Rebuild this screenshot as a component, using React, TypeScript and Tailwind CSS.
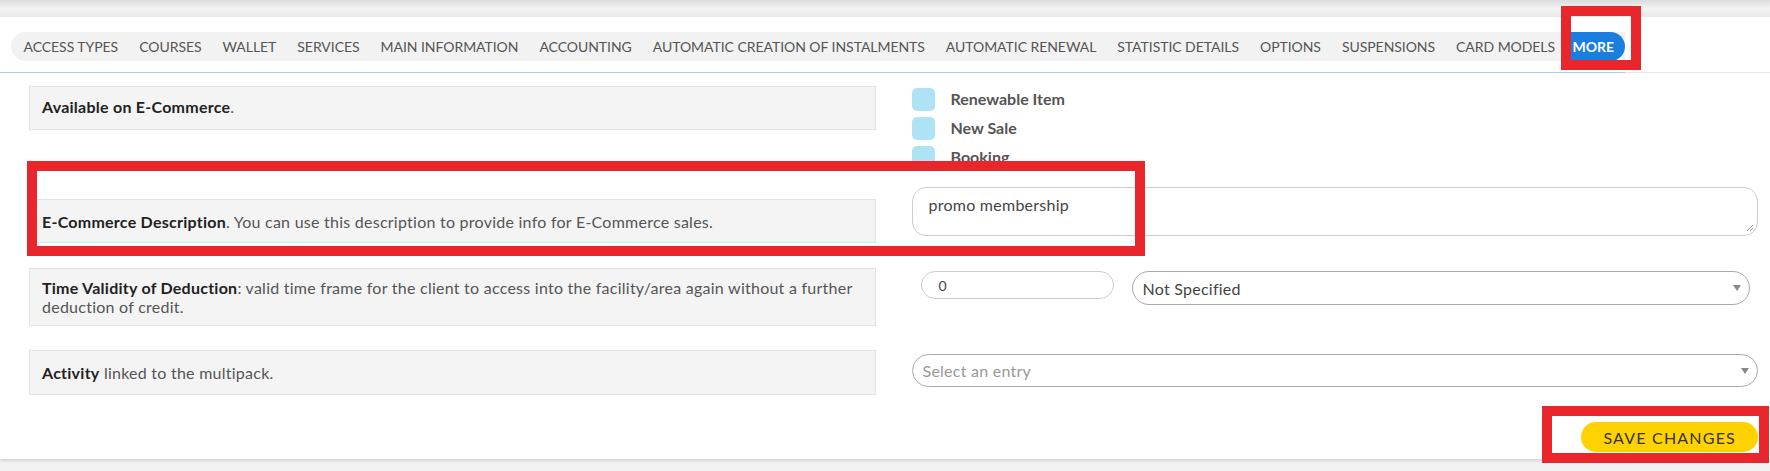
import React from 'react';

const tabs = [
  'ACCESS TYPES',
  'COURSES',
  'WALLET',
  'SERVICES',
  'MAIN INFORMATION',
  'ACCOUNTING',
  'AUTOMATIC CREATION OF INSTALMENTS',
  'AUTOMATIC RENEWAL',
  'STATISTIC DETAILS',
  'OPTIONS',
  'SUSPENSIONS',
  'CARD MODELS',
];

const checks = ['Renewable Item', 'New Sale', 'Booking'];

// small grey triangle used by the selects
const Caret = () => (
  <svg width="8" height="6" viewBox="0 0 8 6" className="shrink-0">
    <path d="M0 0h8L4 6z" fill="#888" />
  </svg>
);

export default function App() {
  return (
    <div className="relative w-[1770px] h-[471px] overflow-hidden bg-[#f2f2f2] font-['Lato','Liberation_Sans',sans-serif]">
      {/* previous panel edge */}
      <div className="h-[17px] bg-gradient-to-b from-[#dcdcdc] via-[#f3f3f3] to-[#e9e9e9]" />

      <div className="bg-white h-[442px] shadow-[0_2px_3px_rgba(0,0,0,0.12)]">
        {/* Tabs */}
        <div className="pt-[15px] flex border-b border-[#e6e6e6]">
          <div className="pl-[11px] pb-[11px] border-b border-[#a8ccec] -mb-px">
            <div className="flex items-center h-[29px] bg-[#f2f2f2] rounded-l-full">
              <div className="w-[2px]" />
              {tabs.map((t) => (
                <span key={t} className="px-[10.5px] text-[14px] text-[#555] whitespace-nowrap tracking-[-0.05px]">
                  {t}
                </span>
              ))}
              <span className="h-[29px] flex items-center pl-[7px] pr-[11px] bg-[#1a7ee0] text-white font-bold text-[14px] rounded-r-full">
                MORE
              </span>
            </div>
          </div>
        </div>

        {/* Form rows */}
        <div className="pl-[29px] pr-[12px] text-[16px] tracking-[0.25px] leading-[19px] text-[#555]">
          {/* Row 1 */}
          <div className="grid grid-cols-2 gap-x-[36px] mt-[13px] items-start">
            <div className="h-[44px] flex items-center px-[12px] bg-[#f4f4f4] border border-[#e3e3e3]">
              <span className="-mt-[3px]">
                <b className="text-[#222]">Available on E-Commerce</b>.
              </span>
            </div>
            <div className="mt-[2px] flex flex-col gap-[6px] tracking-normal">
              {checks.map((c) => (
                <div key={c} className="flex items-center gap-[16px] h-[23px]">
                  <div className="w-[23px] h-[23px] rounded-[5px] bg-[#aee3f5]" />
                  <span className="font-bold text-[16px] text-[#555] -mt-[2px]">{c}</span>
                </div>
              ))}
            </div>
          </div>

          {/* Row 2 */}
          <div className="grid grid-cols-2 gap-x-[36px] mt-[18px] items-start">
            <div className="mt-[12px] h-[44px] flex items-center px-[12px] bg-[#f4f4f4] border border-[#e3e3e3]">
              <span>
                <b className="text-[#222]">E-Commerce Description</b>. You can use this description to provide info for E-Commerce sales.
              </span>
            </div>
            <div className="relative h-[49px] border border-[#cccccc] rounded-[14px] pl-[16px] pt-[7px] text-[#444]">
              promo membership
              <svg width="8" height="8" viewBox="0 0 8 8" className="absolute right-[3px] bottom-[3px]">
                <path d="M1 7L7 1M4 7L7 4" stroke="#999" strokeWidth="1" />
              </svg>
            </div>
          </div>

          {/* Row 3 */}
          <div className="grid grid-cols-2 gap-x-[36px] mt-[25px] items-start">
            <div className="h-[58px] flex items-center px-[12px] bg-[#f4f4f4] border border-[#e3e3e3]">
              <span>
                <b className="text-[#222]">Time Validity of Deduction</b>: valid time frame for the client to access into the facility/area again without a further deduction of credit.
              </span>
            </div>
            <div className="mt-[3px] flex items-start gap-[18px] pl-[9px]">
              <div className="w-[193px] h-[28px] border border-[#cccccc] rounded-full flex items-center pl-[17px] text-[14px] text-[#444]">
                0
              </div>
              <div className="flex-1 mr-[8px] h-[34px] border border-[#aaaaaa] rounded-[17px] flex items-center justify-between pl-[10px] pr-[8px] text-[#444]">
                <span>Not Specified</span>
                <Caret />
              </div>
            </div>
          </div>

          {/* Row 4 */}
          <div className="grid grid-cols-2 gap-x-[36px] mt-[24px] items-start">
            <div className="h-[45px] flex items-center px-[12px] bg-[#f4f4f4] border border-[#e3e3e3]">
              <span>
                <b className="text-[#222]">Activity</b> linked to the multipack.
              </span>
            </div>
            <div className="mt-[4px] h-[33px] border border-[#aaaaaa] rounded-full flex items-center justify-between pl-[10px] pr-[8px] text-[#999]">
              <span>Select an entry</span>
              <Caret />
            </div>
          </div>

          {/* Save */}
          <div className="flex justify-end mt-[27px]">
            <button className="h-[30px] px-[22px] bg-[#ffd200] rounded-full text-[16px] tracking-[1.2px] text-[#333]">
              SAVE CHANGES
            </button>
          </div>
        </div>
      </div>

      {/* annotation frames */}
      <div className="absolute left-[1561px] top-[6px] w-[80px] h-[64px] border-[10px] border-[#e8262b]" />
      <div className="absolute left-[27px] top-[161px] w-[1118px] h-[95px] border-[10px] border-[#e8262b]" />
      <div className="absolute left-[1542px] top-[406px] w-[227px] h-[57px] border-[10px] border-[#e8262b]" />
    </div>
  );
}
